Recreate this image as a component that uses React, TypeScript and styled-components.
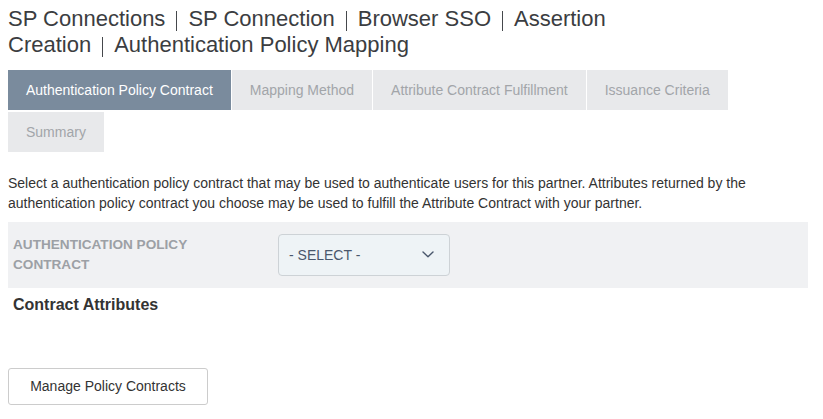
import React from "react";
import styled, { createGlobalStyle } from "styled-components";

const GlobalStyle = createGlobalStyle`
  html, body {
    margin: 0;
    padding: 0;
    background: #ffffff;
  }
  body {
    font-family: "Liberation Sans", Arial, Helvetica, sans-serif;
    color: #333333;
  }
  * {
    box-sizing: border-box;
  }
`;

const Page = styled.div`
  width: 823px;
  padding: 6px 15px 0 8px;
`;

const Title = styled.h1`
  max-width: 640px;
  margin: 0;
  font-size: 22px;
  font-weight: normal;
  line-height: 26.4px;
  color: #3b3d41;
`;

// thin divider between the breadcrumb parts
const Sep = styled.span`
  display: inline-block;
  width: 1px;
  height: 20px;
  margin: 0 11px;
  background: #45484c;
  vertical-align: -5px;
`;

const Tabs = styled.div`
  display: flex;
  flex-wrap: wrap;
  gap: 2px 1px;
  margin-top: 11px;
`;

const Tab = styled.div<{ $active?: boolean }>`
  height: 40px;
  padding: 0 18px;
  font-size: 14px;
  line-height: 40px;
  white-space: nowrap;
  cursor: pointer;
  background: ${(p) => (p.$active ? "#7a8b9d" : "#e8e9eb")};
  color: ${(p) => (p.$active ? "#ffffff" : "#a2a5a9")};
`;

const Description = styled.p`
  margin: 21px 0 9px;
  font-size: 14px;
  line-height: 20px;
  color: #333333;
`;

const FieldRow = styled.div`
  display: grid;
  grid-template-columns: 265px 1fr;
  align-items: center;
  padding: 12px 5px;
  background: #f0f1f3;
`;

const FieldLabel = styled.div`
  padding-right: 30px;
  font-size: 13.6px;
  font-weight: bold;
  line-height: 20px;
  text-transform: uppercase;
  color: #9ca0a5;
`;

const SelectBox = styled.button`
  display: flex;
  align-items: center;
  justify-content: space-between;
  width: 172px;
  height: 42px;
  padding: 0 15px 0 10px;
  border: 1px solid #cdd2d6;
  border-radius: 4px;
  background: #eef3f6;
  font-family: inherit;
  font-size: 14px;
  color: #4a576c;
  cursor: pointer;
`;

const SectionHeading = styled.h2`
  margin: 7px 0 0;
  padding-left: 5px;
  font-size: 16px;
  font-weight: bold;
  line-height: 20px;
  color: #333333;
`;

const ManageButton = styled.button`
  display: block;
  width: 200px;
  height: 37px;
  margin-top: 53px;
  padding: 0;
  border: 1px solid #cccccc;
  border-radius: 3px;
  background: #ffffff;
  font-family: inherit;
  font-size: 14px;
  color: #333333;
  cursor: pointer;
`;

const CRUMBS = [
  "SP Connections",
  "SP Connection",
  "Browser SSO",
  "Assertion Creation",
  "Authentication Policy Mapping",
];

const TABS = [
  "Authentication Policy Contract",
  "Mapping Method",
  "Attribute Contract Fulfillment",
  "Issuance Criteria",
  "Summary",
];

const Chevron = () => (
  <svg width="12" height="7" viewBox="0 0 12 7" fill="none">
    <polyline
      points="1,1 6,5.8 11,1"
      stroke="#4a576c"
      strokeWidth="1.4"
      strokeLinecap="round"
      strokeLinejoin="round"
    />
  </svg>
);

const App = () => {
  return (
    <Page>
      <GlobalStyle />
      <Title>
        {CRUMBS.map((crumb, index) => (
          <React.Fragment key={crumb}>
            {index > 0 && <Sep />}
            {crumb}
          </React.Fragment>
        ))}
      </Title>
      <Tabs>
        {TABS.map((tab, index) => (
          <Tab key={tab} $active={index === 0}>
            {tab}
          </Tab>
        ))}
      </Tabs>
      <Description>
        Select a authentication policy contract that may be used to
        authenticate users for this partner. Attributes returned by the
        authentication policy contract you choose may be used to fulfill the
        Attribute Contract with your partner.
      </Description>
      <FieldRow>
        <FieldLabel>Authentication Policy Contract</FieldLabel>
        <SelectBox>
          <span>- SELECT -</span>
          <Chevron />
        </SelectBox>
      </FieldRow>
      <SectionHeading>Contract Attributes</SectionHeading>
      <ManageButton>Manage Policy Contracts</ManageButton>
    </Page>
  );
};

export default App;
